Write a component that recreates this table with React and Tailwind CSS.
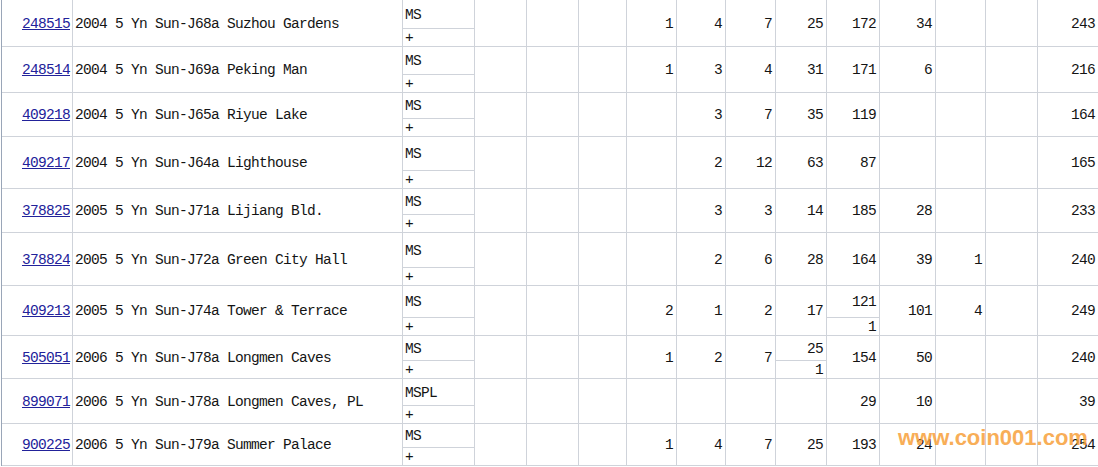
const rows = [
  { id: "248515", name: "2004 5 Yn Sun-J68a Suzhou Gardens", grade: "MS", h: "h-[47px]", c: { 6: "1", 7: "4", 8: "7", 9: "25", 10: "172", 11: "34", 14: "243" } },
  { id: "248514", name: "2004 5 Yn Sun-J69a Peking Man", grade: "MS", h: "h-[46px]", c: { 6: "1", 7: "3", 8: "4", 9: "31", 10: "171", 11: "6", 14: "216" } },
  { id: "409218", name: "2004 5 Yn Sun-J65a Riyue Lake", grade: "MS", h: "h-[44px]", c: { 7: "3", 8: "7", 9: "35", 10: "119", 14: "164" } },
  { id: "409217", name: "2004 5 Yn Sun-J64a Lighthouse", grade: "MS", h: "h-[52px]", c: { 7: "2", 8: "12", 9: "63", 10: "87", 14: "165" } },
  { id: "378825", name: "2005 5 Yn Sun-J71a Lijiang Bld.", grade: "MS", h: "h-[44px]", c: { 7: "3", 8: "3", 9: "14", 10: "185", 11: "28", 14: "233" } },
  { id: "378824", name: "2005 5 Yn Sun-J72a Green City Hall", grade: "MS", h: "h-[53px]", c: { 7: "2", 8: "6", 9: "28", 10: "164", 11: "39", 12: "1", 14: "240" } },
  { id: "409213", name: "2005 5 Yn Sun-J74a Tower & Terrace", grade: "MS", h: "h-[50px]", c: { 6: "2", 7: "1", 8: "2", 9: "17", 10: ["121", "1"], 11: "101", 12: "4", 14: "249" } },
  { id: "505051", name: "2006 5 Yn Sun-J78a Longmen Caves", grade: "MS", h: "h-[43px]", c: { 6: "1", 7: "2", 8: "7", 9: ["25", "1"], 10: "154", 11: "50", 14: "240" } },
  { id: "899071", name: "2006 5 Yn Sun-J78a Longmen Caves, PL", grade: "MSPL", h: "h-[45px]", c: { 10: "29", 11: "10", 14: "39" } },
  { id: "900225", name: "2006 5 Yn Sun-J79a Summer Palace", grade: "MS", h: "h-[42px]", c: { 6: "1", 7: "4", 8: "7", 9: "25", 10: "193", 11: "24", 14: "254" } },
];

const line = "border-[#cfd3da]";

function Cell({ v, last }) {
  const edge = last ? "" : `border-r ${line}`;
  if (Array.isArray(v)) {
    return (
      <div className={`flex flex-col ${edge}`}>
        <div className={`flex-1 flex items-center justify-end pt-[2px] pr-[3px] border-b ${line}`}>{v[0]}</div>
        <div className="h-[17px] flex items-center justify-end pt-[2px] pr-[3px]">{v[1]}</div>
      </div>
    );
  }
  return <div className={`flex items-center justify-end pt-[2px] pr-[3px] ${edge}`}>{v}</div>;
}

function Row({ row }) {
  return (
    <div
      className={`grid grid-cols-[71px_330px_72px_52px_52px_48px_50px_49px_50px_51px_53px_56px_50px_52px_60px] border-b ${line} ${row.h}`}
    >
      <div className={`flex items-center justify-end pt-[2px] pr-[2px] border-r ${line}`}>
        <a href="#" className="text-[#22229a] underline">{row.id}</a>
      </div>
      <div className={`flex items-center pt-[2px] pl-[2px] border-r ${line}`}>{row.name}</div>
      <div className={`flex flex-col border-r ${line}`}>
        <div className={`flex-1 flex items-center pt-[2px] pl-[2px] border-b ${line}`}>{row.grade}</div>
        <div className="h-[17px] flex items-center pt-[2px] pl-[2px]">+</div>
      </div>
      {[3, 4, 5, 6, 7, 8, 9, 10, 11, 12, 13, 14].map((i) => (
        <Cell key={i} v={row.c[i]} last={i === 14} />
      ))}
    </div>
  );
}

export default function App() {
  return (
    <div className="relative w-[1098px] h-[467px] overflow-hidden bg-white text-[#141414] font-['Liberation_Mono',monospace] text-[14.5px] tracking-[-0.7px] leading-none">
      <div className="ml-[1px] border-l border-[#9aa6b8]">
        {rows.map((r) => (
          <Row key={r.id} row={r} />
        ))}
      </div>
      <div className="absolute left-[898px] top-[427px] font-['Liberation_Sans',sans-serif] font-bold text-[22px] tracking-normal leading-none text-[#f7a03a] opacity-85">
        www.coin001.com
      </div>
    </div>
  );
}
